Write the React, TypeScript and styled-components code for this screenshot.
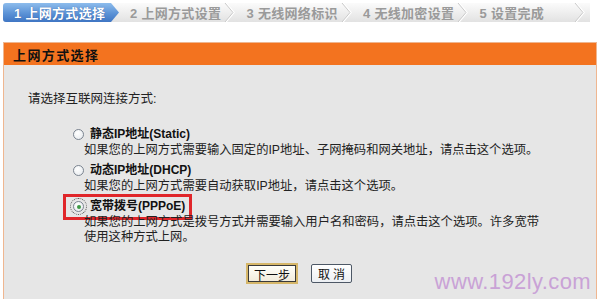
import React from "react";
import styled, { createGlobalStyle } from "styled-components";

const GlobalStyle = createGlobalStyle`
  html, body { margin: 0; padding: 0; background: #ffffff; }
  body { font-family: "Liberation Sans", "Noto Sans CJK SC", sans-serif; }
`;

const Page = styled.div`
  position: relative;
  width: 600px;
  height: 299px;
  padding: 3px 3px 0 3px;
  box-sizing: border-box;
  overflow: hidden;
`;

const StepBar = styled.div`
  display: flex;
  height: 19px;
  width: 587px;
  background: linear-gradient(#fbfbfb, #ececec 60%, #e2e2e2);
  border-radius: 3px 0 0 3px;
`;

const Step = styled.div<{ $active?: boolean }>`
  width: 116.5px;
  flex: none;
  display: flex;
  align-items: center;
  box-sizing: border-box;
  padding-left: ${(p) => (p.$active ? "11px" : "10.5px")};
  font-size: 13px;
  font-weight: bold;
  letter-spacing: 0.3px;
  color: ${(p) => (p.$active ? "#ffffff" : "#9a9a9a")};
  background: ${(p) =>
    p.$active ? "linear-gradient(#8dbcec, #5b92d6 55%, #3f76c4)" : "transparent"};
  clip-path: ${(p) =>
    p.$active ? "polygon(0 0, 108px 0, 116px 50%, 108px 100%, 0 100%)" : "none"};
  border-radius: ${(p) => (p.$active ? "3px 0 0 3px" : "0")};
  text-shadow: ${(p) => (p.$active ? "0 0 1px rgba(30,60,120,0.6)" : "none")};
`;

const StepLabel = styled.span`
  flex: 1;
  white-space: nowrap;
`;

const Chevron = styled.svg`
  flex: none;
  width: 12px;
  height: 19px;
`;

const Panel = styled.div`
  margin-top: 20px;
  width: 594px;
  box-sizing: border-box;
  border: 1px solid #efb690;
  background: #e6e6e6;
`;

const PanelHeader = styled.div`
  height: 22px;
  background: #f3731f;
  display: flex;
  align-items: center;
  padding-left: 9px;
  font-size: 13px;
  font-weight: bold;
  letter-spacing: 1.4px;
  color: #111;
`;

const PanelBody = styled.div`
  padding: 27px 0 16px 24px;
`;

const Prompt = styled.div`
  font-size: 12.5px;
  line-height: 15px;
  color: #222;
`;

const OptionList = styled.div`
  margin: 19px 0 0 45px;
  display: flex;
  flex-direction: column;
  gap: 4px;
`;

const Option = styled.div`
  display: flex;
  flex-direction: column;
`;

const OptionHead = styled.div<{ $highlighted?: boolean }>`
  display: flex;
  align-items: center;
  gap: 6px;
  width: fit-content;
  height: 17px;
  ${(p) =>
    p.$highlighted
      ? `
    border: 3px solid #e0262a;
    padding: 1.5px 4px 1.5px 7px;
    margin: -4.5px 0 -4.5px -10px;
  `
      : ""}
`;

const Radio = styled.span<{ $checked?: boolean }>`
  position: relative;
  width: 11px;
  height: 11px;
  box-sizing: border-box;
  border-radius: 50%;
  border: 1px solid #7b8490;
  background: radial-gradient(circle at 40% 35%, #ffffff, #e4e8ec);
  flex: none;
  ${(p) =>
    p.$checked
      ? `
    outline: 1px dotted #555;
    outline-offset: 2px;
    &::after {
      content: "";
      position: absolute;
      left: 2.5px;
      top: 2.5px;
      width: 4px;
      height: 4px;
      border-radius: 50%;
      background: #3f9a46;
    }
  `
      : ""}
`;

const OptionLabel = styled.span`
  font-size: 12px;
  font-weight: bold;
  line-height: 17px;
  color: #111;
  white-space: nowrap;
`;

const OptionDesc = styled.div`
  padding-left: 11px;
  font-size: 12.3px;
  line-height: 15px;
  color: #222;
`;

const ButtonRow = styled.div`
  margin-top: 19px;
  display: flex;
  justify-content: center;
  align-items: center;
  gap: 15px;
  padding-right: 24px;
`;

const Button = styled.button<{ $primary?: boolean }>`
  font-family: "Liberation Sans", "Noto Sans CJK SC", sans-serif;
  font-size: 12px;
  color: #111;
  padding: 0;
  margin: 0;
  box-sizing: border-box;
  cursor: pointer;
  ${(p) =>
    p.$primary
      ? `
    width: 48px;
    height: 17px;
    border: 1px solid #3a3a3a;
    box-shadow: 0 0 0 2px #d6b76a;
    background: linear-gradient(#fffffa, #f2ecdc);
  `
      : `
    width: 41px;
    height: 19px;
    border: 1px solid #4d5866;
    border-radius: 2px;
    background: linear-gradient(#ffffff, #eceff3);
    letter-spacing: 3px;
    padding-left: 3px;
  `}
`;

const Watermark = styled.div`
  position: absolute;
  right: 9px;
  bottom: 4px;
  font-family: "Liberation Sans", sans-serif;
  font-size: 22px;
  color: #c9a2d6;
  letter-spacing: 0.4px;
`;

const steps = ["1 上网方式选择", "2 上网方式设置", "3 无线网络标识", "4 无线加密设置", "5 设置完成"];

const ChevronIcon = () => (
  <Chevron viewBox="0 0 12 19">
    <polyline points="2,0 10,9.5 2,19" fill="none" stroke="#ffffff" strokeWidth="1.5" />
    <polyline points="1,0 9,9.5 1,19" fill="none" stroke="#c9c9c9" strokeWidth="1" />
  </Chevron>
);

export default function App() {
  return (
    <>
      <GlobalStyle />
      <Page>
        <StepBar>
          {steps.map((s, i) => (
            <Step key={s} $active={i === 0}>
              <StepLabel>{s}</StepLabel>
              {i > 0 && <ChevronIcon />}
            </Step>
          ))}
        </StepBar>
        <Panel>
          <PanelHeader>上网方式选择</PanelHeader>
          <PanelBody>
            <Prompt>请选择互联网连接方式:</Prompt>
            <OptionList>
              <Option>
                <OptionHead>
                  <Radio />
                  <OptionLabel>静态IP地址(Static)</OptionLabel>
                </OptionHead>
                <OptionDesc>如果您的上网方式需要输入固定的IP地址、子网掩码和网关地址，请点击这个选项。</OptionDesc>
              </Option>
              <Option>
                <OptionHead>
                  <Radio />
                  <OptionLabel>动态IP地址(DHCP)</OptionLabel>
                </OptionHead>
                <OptionDesc>如果您的上网方式需要自动获取IP地址，请点击这个选项。</OptionDesc>
              </Option>
              <Option>
                <OptionHead $highlighted>
                  <Radio $checked />
                  <OptionLabel>宽带拨号(PPPoE)</OptionLabel>
                </OptionHead>
                <OptionDesc>
                  如果您的上网方式是拨号方式并需要输入用户名和密码，请点击这个选项。许多宽带
                  <br />
                  使用这种方式上网。
                </OptionDesc>
              </Option>
            </OptionList>
            <ButtonRow>
              <Button $primary>下一步</Button>
              <Button>取消</Button>
            </ButtonRow>
          </PanelBody>
        </Panel>
        <Watermark>www.192ly.com</Watermark>
      </Page>
    </>
  );
}
